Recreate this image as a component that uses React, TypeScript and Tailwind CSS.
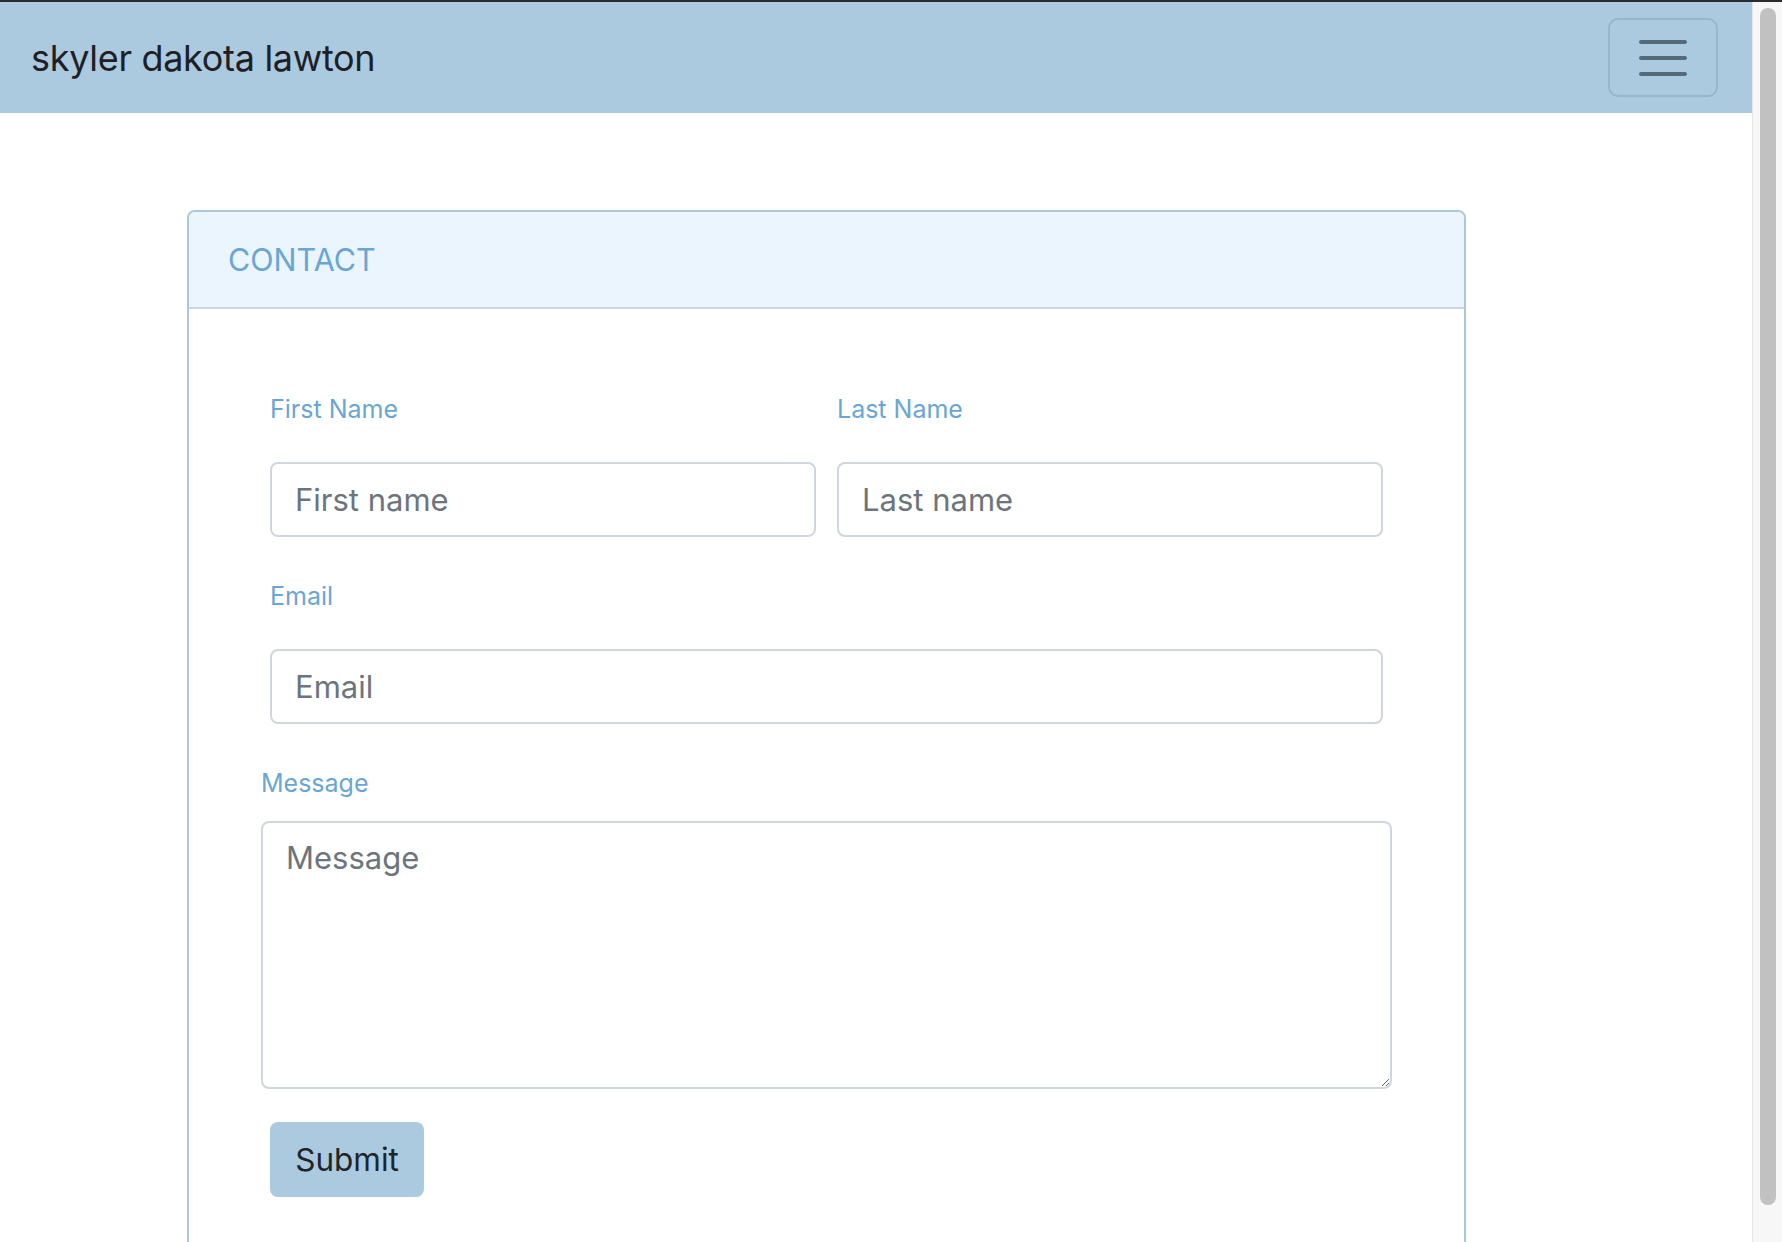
import { useState } from 'react';

const FONT = { fontFamily: 'Inter, "Liberation Sans", Arial, sans-serif' };

function Field({
  label,
  placeholder,
  value,
  onChange,
}: {
  label: string;
  placeholder: string;
  value: string;
  onChange: (v: string) => void;
}) {
  return (
    <div className="flex flex-col min-w-0">
      <label className="text-[25px] leading-[39px] text-[#6aa6d4] mb-[33px]">{label}</label>
      <input
        type="text"
        value={value}
        placeholder={placeholder}
        onChange={(e) => onChange(e.target.value)}
        className="h-[75px] w-full border-2 border-[#d0d6dd] rounded-[8px] px-[23px] text-[31px] text-[#212529] placeholder:text-[#6c757d] outline-none bg-white"
      />
    </div>
  );
}

export default function App() {
  const [form, setForm] = useState({ first: '', last: '', email: '', message: '' });

  function set(key: keyof typeof form) {
    return (v: string) => setForm((prev) => ({ ...prev, [key]: v }));
  }

  return (
    <div className="h-screen flex flex-col overflow-hidden border-t-2 border-[#2b2b2b] bg-white" style={FONT}>
      <div className="flex flex-1 min-h-0">
        {/* Page */}
        <div className="flex-1 min-w-0 flex flex-col">
          {/* Navbar */}
          <nav className="h-[111px] shrink-0 bg-[#abc9df] flex items-center justify-between pl-[31px] pr-[34px]">
            <span className="text-[36px] text-[#1d2125] tracking-[-0.3px]">skyler dakota lawton</span>
            <button className="w-[110px] h-[79px] border-2 border-[#9ab5ca] rounded-[10px] flex flex-col items-center justify-center gap-[12px]">
              <span className="block w-[48px] h-[4px] rounded-full bg-[#546a7b]" />
              <span className="block w-[48px] h-[4px] rounded-full bg-[#546a7b]" />
              <span className="block w-[48px] h-[4px] rounded-full bg-[#546a7b]" />
            </button>
          </nav>

          {/* Content */}
          <div className="pt-[97px] pl-[187px] pr-[286px]">
            <div className="border-2 border-[#a9c8df] rounded-[8px] overflow-hidden">
              <div className="h-[97px] bg-[#eaf5fe] border-b-2 border-[#c9d7e3] flex items-center pl-[39px]">
                <h2 className="text-[30.5px] text-[#6aa6d4]">CONTACT</h2>
              </div>

              <form className="px-[72px] pt-[81px] pb-[60px]" onSubmit={(e) => e.preventDefault()}>
                <div className="px-[9px] grid grid-cols-2 gap-x-[21px]">
                  <Field label="First Name" placeholder="First name" value={form.first} onChange={set('first')} />
                  <Field label="Last Name" placeholder="Last name" value={form.last} onChange={set('last')} />
                </div>

                <div className="px-[9px] mt-[40px]">
                  <Field label="Email" placeholder="Email" value={form.email} onChange={set('email')} />
                </div>

                <div className="mt-[40px] flex flex-col">
                  <label className="text-[25px] leading-[39px] text-[#6aa6d4] mb-[18px]">Message</label>
                  <textarea
                    value={form.message}
                    placeholder="Message"
                    onChange={(e) => set('message')(e.target.value)}
                    className="h-[268px] w-full border-2 border-[#d0d6dd] rounded-[8px] px-[23px] py-[12px] text-[31px] leading-[45px] text-[#212529] placeholder:text-[#6c757d] outline-none bg-white resize-y"
                  />
                </div>

                <div className="px-[9px] mt-[33px]">
                  <button
                    type="submit"
                    className="h-[75px] w-[154px] rounded-[8px] bg-[#abc9df] text-[31.5px] text-[#212529]"
                  >
                    Submit
                  </button>
                </div>
              </form>
            </div>
          </div>
        </div>

        {/* Scrollbar */}
        <div className="w-[30px] shrink-0 bg-[#f7f7f7] border-l border-[#e6e6e6] pt-[6px] pl-[7px]">
          <div className="w-[16px] h-[1197px] rounded-full bg-[#c1c1c1]" />
        </div>
      </div>
    </div>
  );
}
